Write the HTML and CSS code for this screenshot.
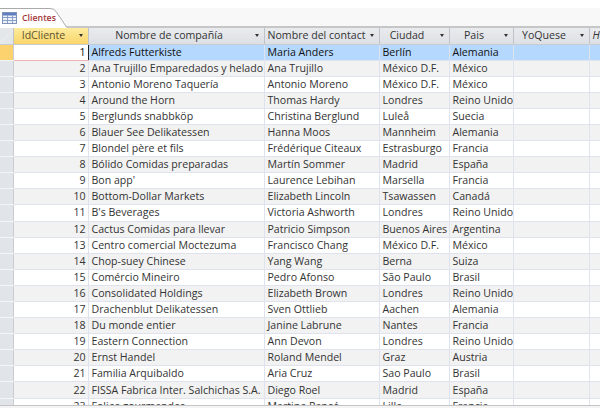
FILE: index.html
```html
<!DOCTYPE html>
<html lang="es">
<head>
<meta charset="utf-8">
<title>Clientes</title>
<link rel="stylesheet" href="styles.css">
</head>
<body>
<div class="window">
  <div class="tabbar">
    <div class="tab">
      <svg class="tab-shape" width="68" height="20" viewBox="0 0 68 20"><path d="M0 .5H50Q54 .5 56 3.5L66.500 19.500V20H0Z" fill="#fff"/><path d="M0 .5H50Q54 .5 56 3.5L66.500 19" fill="none" stroke="#aaa"/></svg>
      <svg class="tab-icon" width="15" height="12" viewBox="0 0 15 12"><rect x="0.5" y="0.5" width="14" height="11" fill="#eef2f8" stroke="#7f93ba"/><rect x="1" y="1" width="13" height="2.5" fill="#5f7fc0"/><path d="M5.500 3v8M10.500 3v8M1 5.500h13M1 8.500h13" stroke="#8aa0c8" fill="none"/></svg>
      <span class="tab-label">Clientes</span>
    </div>
  </div>
  <table class="sheet">
    <colgroup><col class="c0"><col class="c1"><col class="c2"><col class="c3"><col class="c4"><col class="c5"><col class="c6"><col class="c7"></colgroup>
    <thead>
      <tr>
        <th class="corner"></th>
        <th class="active"><div class="h"><span>IdCliente</span><i></i></div></th>
        <th><div class="h"><span>Nombre de compañía</span><i></i></div></th>
        <th><div class="h left"><span>Nombre del contact</span><i></i></div></th>
        <th><div class="h"><span>Ciudad</span><i></i></div></th>
        <th><div class="h"><span>Pais</span><i></i></div></th>
        <th><div class="h"><span>YoQuese</span><i></i></div></th>
        <th><div class="h left"><em>Ha</em></div></th>
      </tr>
    </thead>
    <tbody>
      <tr class="selected"><td class="sel"></td><td class="id focus">1</td><td>Alfreds Futterkiste</td><td>Maria Anders</td><td>Berlín</td><td>Alemania</td><td></td><td></td></tr>
      <tr><td class="sel"></td><td class="id">2</td><td>Ana Trujillo Emparedados y helado</td><td>Ana Trujillo</td><td>México D.F.</td><td>México</td><td></td><td></td></tr>
      <tr><td class="sel"></td><td class="id">3</td><td>Antonio Moreno Taquería</td><td>Antonio Moreno</td><td>México D.F.</td><td>México</td><td></td><td></td></tr>
      <tr><td class="sel"></td><td class="id">4</td><td>Around the Horn</td><td>Thomas Hardy</td><td>Londres</td><td>Reino Unido</td><td></td><td></td></tr>
      <tr><td class="sel"></td><td class="id">5</td><td>Berglunds snabbköp</td><td>Christina Berglund</td><td>Luleå</td><td>Suecia</td><td></td><td></td></tr>
      <tr><td class="sel"></td><td class="id">6</td><td>Blauer See Delikatessen</td><td>Hanna Moos</td><td>Mannheim</td><td>Alemania</td><td></td><td></td></tr>
      <tr><td class="sel"></td><td class="id">7</td><td>Blondel père et fils</td><td>Frédérique Citeaux</td><td>Estrasburgo</td><td>Francia</td><td></td><td></td></tr>
      <tr><td class="sel"></td><td class="id">8</td><td>Bólido Comidas preparadas</td><td>Martín Sommer</td><td>Madrid</td><td>España</td><td></td><td></td></tr>
      <tr><td class="sel"></td><td class="id">9</td><td>Bon app'</td><td>Laurence Lebihan</td><td>Marsella</td><td>Francia</td><td></td><td></td></tr>
      <tr><td class="sel"></td><td class="id">10</td><td>Bottom-Dollar Markets</td><td>Elizabeth Lincoln</td><td>Tsawassen</td><td>Canadá</td><td></td><td></td></tr>
      <tr><td class="sel"></td><td class="id">11</td><td>B's Beverages</td><td>Victoria Ashworth</td><td>Londres</td><td>Reino Unido</td><td></td><td></td></tr>
      <tr><td class="sel"></td><td class="id">12</td><td>Cactus Comidas para llevar</td><td>Patricio Simpson</td><td>Buenos Aires</td><td>Argentina</td><td></td><td></td></tr>
      <tr><td class="sel"></td><td class="id">13</td><td>Centro comercial Moctezuma</td><td>Francisco Chang</td><td>México D.F.</td><td>México</td><td></td><td></td></tr>
      <tr><td class="sel"></td><td class="id">14</td><td>Chop-suey Chinese</td><td>Yang Wang</td><td>Berna</td><td>Suiza</td><td></td><td></td></tr>
      <tr><td class="sel"></td><td class="id">15</td><td>Comércio Mineiro</td><td>Pedro Afonso</td><td>São Paulo</td><td>Brasil</td><td></td><td></td></tr>
      <tr><td class="sel"></td><td class="id">16</td><td>Consolidated Holdings</td><td>Elizabeth Brown</td><td>Londres</td><td>Reino Unido</td><td></td><td></td></tr>
      <tr><td class="sel"></td><td class="id">17</td><td>Drachenblut Delikatessen</td><td>Sven Ottlieb</td><td>Aachen</td><td>Alemania</td><td></td><td></td></tr>
      <tr><td class="sel"></td><td class="id">18</td><td>Du monde entier</td><td>Janine Labrune</td><td>Nantes</td><td>Francia</td><td></td><td></td></tr>
      <tr><td class="sel"></td><td class="id">19</td><td>Eastern Connection</td><td>Ann Devon</td><td>Londres</td><td>Reino Unido</td><td></td><td></td></tr>
      <tr><td class="sel"></td><td class="id">20</td><td>Ernst Handel</td><td>Roland Mendel</td><td>Graz</td><td>Austria</td><td></td><td></td></tr>
      <tr><td class="sel"></td><td class="id">21</td><td>Familia Arquibaldo</td><td>Aria Cruz</td><td>Sao Paulo</td><td>Brasil</td><td></td><td></td></tr>
      <tr><td class="sel"></td><td class="id">22</td><td>FISSA Fabrica Inter. Salchichas S.A.</td><td>Diego Roel</td><td>Madrid</td><td>España</td><td></td><td></td></tr>
      <tr><td class="sel"></td><td class="id">23</td><td>Folies gourmandes</td><td>Martine Rancé</td><td>Lille</td><td>Francia</td><td></td><td></td></tr>
    </tbody>
  </table>
</div>
</body>
</html>
```
FILE: styles.css
```css
* { box-sizing: border-box; }
html, body { margin: 0; padding: 0; background: #fff; }
.window {
  width: 600px; height: 408px; overflow: hidden; position: relative;
  font-family: "Open Sans", "Noto Sans", sans-serif; font-size: 10.6px; color: #333;
  background: #fff;
}
.window::after {
  content: ""; position: absolute; left: 0; right: 0; bottom: 0; height: 2px;
  background: #f4f4f4; border-top: 1px solid #c4c4c4;
}
.tabbar {
  height: 28px; padding-top: 8px; border-bottom: 2px solid #c6c6c6;
  background: linear-gradient(#fff 0 8px, #f8f8f8 8px);
}
.tab {
  position: relative; display: flex; align-items: center; gap: 5px;
  width: 66px; height: 18px; padding: 2px 0 0 2px;
}
.tab-shape { position: absolute; left: 0; top: 0; }
.tab-icon, .tab-label { position: relative; }
.tab-icon { flex: none; }
.tab-label { color: #a4373a; font-size: 8.8px; font-weight: 600; }
.sheet { border-collapse: collapse; table-layout: fixed; width: 600px; }
.c0 { width: 13px; } .c1 { width: 75px; } .c2 { width: 176px; } .c3 { width: 115px; }
.c4 { width: 70px; } .c5 { width: 64px; } .c6 { width: 76px; } .c7 { width: 11px; }
th {
  height: 16px; padding: 0; font-weight: 400; background: linear-gradient(#e9ebee, #dcdfe4);
  border-right: 1px solid #bfc3c9; border-bottom: 1px solid #c8ccd2;
}
th.corner { background: linear-gradient(135deg, #e4e7ea 48%, #f2f3f5 50%, #e4e7ea 54%); }
th.active { background: linear-gradient(#fdeb9e, #f9d56a); color: #5d5530; }
.h { position: relative; height: 15px; line-height: 15px; text-align: center; padding-right: 14px; white-space: nowrap; overflow: hidden; }
.h.left { text-align: left; padding-left: 3px; }
.h i {
  position: absolute; right: 5px; top: 6px; width: 0; height: 0;
  border: 2.5px solid transparent; border-top: 3px solid #333; border-bottom: 0;
}
.h em { font-style: italic; }
tbody tr { height: 16.1px; }
td {
  padding: 0 0 0 3px; height: 16.1px; line-height: 15px; white-space: nowrap; overflow: hidden;
  border-right: 1px solid #dfe3ee; border-bottom: 1px solid #dfe3ee; background: #fff;
}
tbody tr:nth-child(even) td { background: #f2f2f2; }
td.sel, tbody tr:nth-child(even) td.sel { background: #e1e4e8; border-right: 1px solid #c8ccd2; border-bottom: 1px solid #f4f5f6; }
td.id { text-align: right; padding: 0 2px 0 0; background: #fff; }
tr.selected td { background: #b5d8ff; color: #111; font-weight: 500; }
tr.selected td.sel { background: #fcd26e; }
tr.selected td.focus { background: #fff; border: 1px solid #f3b3b3; border-right: 1px solid #222; font-weight: 400; }
```
